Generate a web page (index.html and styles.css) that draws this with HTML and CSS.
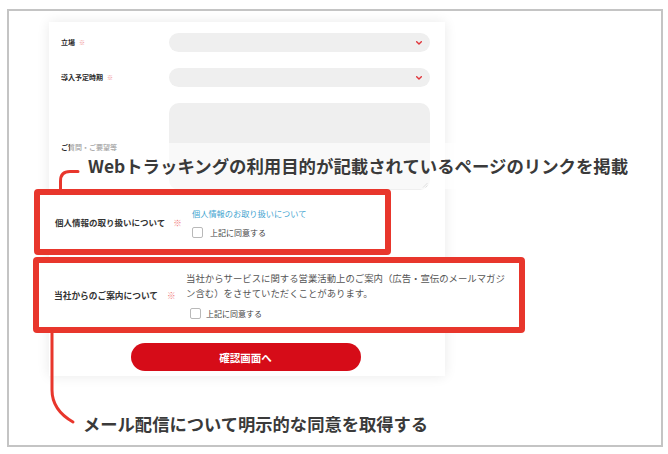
FILE: index.html
```html
<!DOCTYPE html>
<html lang="ja">
<head>
<meta charset="utf-8">
<title>フォーム</title>
<link rel="stylesheet" href="styles.css">
</head>
<body>
<div class="frame">
  <div class="card">
    <div class="row">
      <div class="label">立場<span class="req">※</span></div>
      <div class="select"><svg class="chev" viewBox="0 0 6 4" width="6" height="4"><path d="M0.7 0.7 L3 3 L5.3 0.7" fill="none" stroke="#e0353a" stroke-width="1.4" stroke-linecap="round" stroke-linejoin="round"/></svg></div>
    </div>
    <div class="row">
      <div class="label">導入予定時期<span class="req">※</span></div>
      <div class="select"><svg class="chev" viewBox="0 0 6 4" width="6" height="4"><path d="M0.7 0.7 L3 3 L5.3 0.7" fill="none" stroke="#e0353a" stroke-width="1.4" stroke-linecap="round" stroke-linejoin="round"/></svg></div>
    </div>
    <div class="row row-ta">
      <div class="label">ご質問・ご要望等</div>
      <div class="textarea"><svg class="grip" viewBox="0 0 6 6" width="6" height="6"><path d="M1 5.5 L5.5 1 M3.5 5.5 L5.5 3.5" stroke="#9a9a9a" stroke-width="0.8"/></svg></div>
    </div>
    <div class="note note-top">Webトラッキングの利用目的が記載されているページのリンクを掲載</div>

    <div class="callout callout-1">
      <div class="c-label">個人情報の取り扱いについて<span class="c-req">※</span></div>
      <div class="c-body">
        <a class="c-link" href="#">個人情報のお取り扱いについて</a>
        <label class="check"><span class="box"></span><span>上記に同意する</span></label>
      </div>
    </div>

    <div class="callout callout-2">
      <div class="c-label">当社からのご案内について<span class="c-req">※</span></div>
      <div class="c-body">
        <p class="c-text">当社からサービスに関する営業活動上のご案内（広告・宣伝のメールマガジ<br>ン含む）をさせていただくことがあります。</p>
        <label class="check check-2"><span class="box"></span><span>上記に同意する</span></label>
      </div>
    </div>

    <div class="actions"><button class="submit" type="button">確認画面へ</button></div>
  </div>
  <p class="note note-bottom">メール配信について明示的な同意を取得する</p>
  <svg class="connectors" viewBox="0 0 668 454" width="668" height="454">
    <path d="M60.5 190 V181 Q60.5 171.5 70 171.5 H78" fill="none" stroke="#e8362c" stroke-width="3" stroke-linecap="round" stroke-linejoin="round"/>
    <path d="M52 332 V390 Q52 410 73 422" fill="none" stroke="#e8362c" stroke-width="3" stroke-linecap="round" stroke-linejoin="round"/>
  </svg>
</div>
</body>
</html>
```
FILE: styles.css
```css
* { box-sizing: border-box; }
html, body { margin: 0; padding: 0; background: #fff; }
body {
  font-family: "Noto Sans CJK JP", "Noto Sans", sans-serif;
  color: #333;
  width: 668px;
  height: 454px;
  overflow: hidden;
}
.frame {
  position: relative;
  margin: 9px 0 0 7px;
  width: 656px;
  height: 438px;
  border: 2px solid #c4c4c4;
  padding: 11px 0 0 40px;
}
.card {
  position: relative;
  width: 396px;
  height: 354px;
  background: #fff;
  box-shadow: 0 0 12px rgba(0, 0, 0, 0.09);
  padding: 11px 15px 5px 12px;
}
.row {
  display: grid;
  grid-template-columns: 108px 261px;
  align-items: center;
  height: 19px;
  margin-bottom: 16px;
}
.row-ta { height: 87px; margin-bottom: 0; }
.label {
  font-size: 7px;
  font-weight: 700;
  line-height: 10px;
  color: #2a2a2a;
  white-space: nowrap;
}
.req { color: #f08c8c; margin-left: 4px; font-size: 6px; }
.select {
  position: relative;
  height: 19px;
  background: #efefef;
  border-radius: 10px;
}
.chev { position: absolute; right: 8px; top: 8px; }
.textarea {
  position: relative;
  height: 87px;
  background: #efefef;
  border-radius: 10px;
}
.grip { position: absolute; right: 2px; bottom: 2px; }
.note {
  margin: 0;
  font-weight: 700;
  color: #3a3a3a;
  white-space: nowrap;
}
.note-top {
  position: absolute;
  left: 21px;
  top: 121px;
  width: 580px;
  height: 46px;
  line-height: 46px;
  padding-left: 18px;
  font-size: 17.4px;
  background: rgba(255, 255, 255, 0.62);
  z-index: 1;
}
.note-bottom {
  margin: 38px 0 0 34px;
  font-size: 17.3px;
  line-height: 20px;
}
.callout {
  position: relative;
  z-index: 1;
  display: flex;
  align-items: center;
  background: #fff;
  border: 6px solid #e8362c;
  border-radius: 4px;
  padding-left: 15px;
}
.callout-1 {
  margin: -1px 0 0 -27px;
  width: 357px;
  height: 66px;
}
.callout-2 {
  margin: 2px 0 0 -28px;
  width: 492px;
  height: 76px;
}
.c-label {
  font-weight: 700;
  color: #333;
  white-space: nowrap;
}
.callout-1 .c-label { width: 137px; font-size: 8.5px; }
.callout-2 .c-label { width: 132px; font-size: 8.7px; }
.c-req { color: #f07a7a; font-weight: 400; }
.callout-1 .c-req { margin-left: 8px; }
.callout-2 .c-req { margin-left: 9px; }
.c-body { display: flex; flex-direction: column; align-items: flex-start; }
.c-link {
  font-size: 8.2px;
  line-height: 12px;
  color: #3fa4d0;
  text-decoration: none;
  white-space: nowrap;
}
.check {
  display: flex;
  align-items: center;
  gap: 7px;
  margin-top: 8px;
  font-size: 8px;
  line-height: 11px;
  color: #444;
  white-space: nowrap;
}
.box {
  width: 11px;
  height: 11px;
  border: 1px solid #b9b9b9;
  border-radius: 2px;
  background: #fff;
}
.c-text {
  margin: 0;
  font-size: 9.4px;
  line-height: 15px;
  color: #555;
  white-space: nowrap;
}
.check-2 { margin: 7px 0 0 4px; gap: 5px; }
.actions { display: flex; justify-content: center; margin-top: 10px; }
.submit {
  width: 230px;
  height: 28px;
  border: 0;
  border-radius: 14px;
  background: #d60c18;
  color: #fff;
  font-family: "Noto Sans CJK JP", sans-serif;
  font-weight: 700;
  font-size: 10.5px;
  padding: 0;
}
.connectors {
  position: absolute;
  left: -9px;
  top: -11px;
  z-index: 2;
  pointer-events: none;
}
```
